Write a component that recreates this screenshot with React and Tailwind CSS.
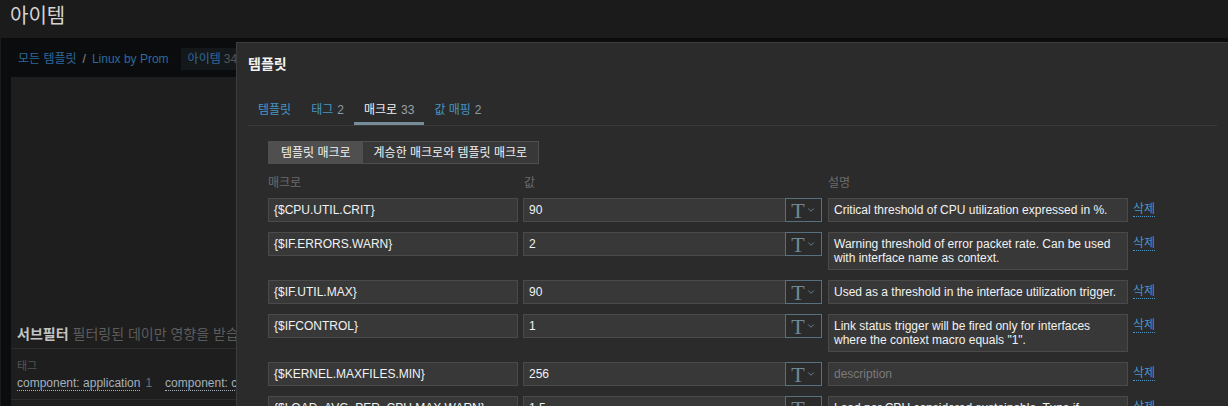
import { ChevronDown } from 'lucide-react';

const rows = [
  { macro: '{$CPU.UTIL.CRIT}', value: '90', desc: 'Critical threshold of CPU utilization expressed in %.' },
  { macro: '{$IF.ERRORS.WARN}', value: '2', desc: 'Warning threshold of error packet rate. Can be used with interface name as context.' },
  { macro: '{$IF.UTIL.MAX}', value: '90', desc: 'Used as a threshold in the interface utilization trigger.' },
  { macro: '{$IFCONTROL}', value: '1', desc: 'Link status trigger will be fired only for interfaces where the context macro equals "1".' },
  { macro: '{$KERNEL.MAXFILES.MIN}', value: '256', desc: '' },
  { macro: '{$LOAD_AVG_PER_CPU.MAX.WARN}', value: '1.5', desc: 'Load per CPU considered sustainable. Tune if needed.' },
];

function MacroRow({ macro, value, desc }) {
  return (
    <div className="flex items-start">
      <div className="w-[250px] h-[24px] flex items-center px-[5px] bg-[#383838] border border-[#4a4a4a] text-[12px] text-[#f2f2f2] whitespace-nowrap overflow-hidden">
        {macro}
      </div>
      <div className="ml-[5px] w-[299px] h-[24px] flex">
        <div className="flex-1 flex items-center px-[5px] bg-[#383838] border border-[#4a4a4a] text-[12px] text-[#f2f2f2]">
          {value}
        </div>
        <div className="w-[37px] -ml-px flex items-center justify-center gap-[1px] bg-[#2b2b2b] border border-[#56707d] text-[#6d8999]">
          <span className="font-['Liberation_Serif',serif] text-[22px] leading-none mt-[1px]">T</span>
          <ChevronDown size={10} strokeWidth={2.2} />
        </div>
      </div>
      <div className="ml-[6px] w-[300px] min-h-[24px] px-[5px] py-[4px] bg-[#383838] border border-[#4a4a4a] text-[12px] leading-[14px] text-[#f2f2f2]">
        {desc ? desc : <span className="text-[#7a7a7a]">description</span>}
      </div>
      <div className="ml-[5px] h-[24px] flex items-center">
        <span className="text-[12px] text-[#4796c4] border-b border-dotted border-[#4796c4] leading-[13px]">삭제</span>
      </div>
    </div>
  );
}

export default function App() {
  return (
    <div className="w-[1228px] h-[406px] overflow-hidden relative bg-[#0b0c0e] font-['Liberation_Sans','Noto_Sans_CJK_KR',sans-serif]">
      {/* page header */}
      <div className="h-[38px] bg-[#1b1b1b] px-[10px] pt-[3px]">
        <h1 className="text-[20px] leading-[26px] text-[#d4d4d4]">아이템</h1>
      </div>

      {/* page body behind the modal */}
      <div className="border-l border-[#1c1c1c]">
        <div className="h-[39px] pl-[17px] pt-[10px] flex items-start">
          <div className="h-[22px] flex items-center text-[12px] text-[#2e6a9a]">
            <span>모든 템플릿</span>
            <span className="mx-[6px] text-[#8c8c8c]">/</span>
            <span>Linux by Prom</span>
          </div>
          <div className="ml-[12px] h-[22px] px-[7px] flex items-center bg-[#15181b] text-[12px] text-[#2e6a9a]">
            아이템 <span className="ml-[3px] text-[#555]">34</span>
          </div>
        </div>
        <div className="ml-[10px] h-[330px] bg-[#1e1e1e] pt-[244px]">
          <div className="h-[28px] pl-[6px] flex items-center border-b border-[#2c2c2c] text-[14px] whitespace-nowrap">
            <span className="font-bold text-[#c4c4c4]">서브필터</span>
            <span className="ml-[4px] text-[#5c5c5c]">필터링된 데이만 영향을 받습니다</span>
          </div>
          <div className="pl-[6px] pt-[10px] h-[51px] border-b border-[#2c2c2c]">
            <div className="text-[11px] leading-[14px] text-[#555]">태그</div>
            <div className="mt-[1px] flex items-center text-[12px] whitespace-nowrap">
              <span className="text-[#a4b0bb] border-b border-dotted border-[#a4b0bb] leading-[14px]">component: application</span>
              <span className="ml-[5px] text-[#6e6e6e]">1</span>
              <span className="ml-[13px] text-[#a4b0bb] border-b border-dotted border-[#a4b0bb] leading-[14px]">component: cpu</span>
            </div>
          </div>
        </div>
      </div>

      {/* modal */}
      <div className="absolute left-[236px] top-[42px] right-0 bottom-0 bg-[#2b2b2b] border-t border-l border-[#3d3d3d] text-[#f2f2f2]">
        <div className="h-[42px] px-[11px] flex items-center">
          <span className="text-[14px] font-bold text-[#f2f2f2]">템플릿</span>
        </div>
        <div className="mt-[6px] mx-[11px] flex border-b border-[#3a3a3a] text-[12px]">
          <div className="h-[34px] px-[10px] pt-[4px] flex items-center text-[#4796c4]">템플릿</div>
          <div className="h-[34px] px-[10px] pt-[4px] flex items-center text-[#4796c4]">
            태그 <span className="ml-[4px] text-[#8a9aa6]">2</span>
          </div>
          <div className="h-[34px] px-[10px] pt-[7px] flex items-center text-[#f2f2f2] border-b-[3px] border-[#768c99]">
            매크로 <span className="ml-[4px] text-[#9aa3a9]">33</span>
          </div>
          <div className="h-[34px] px-[10px] pt-[4px] flex items-center text-[#4796c4]">
            값 매핑 <span className="ml-[4px] text-[#8a9aa6]">2</span>
          </div>
        </div>

        <div className="pl-[31px] pt-[15px]">
          <div className="inline-flex h-[23px] border border-[#4f4f4f] text-[12px] align-top">
            <div className="px-[12px] flex items-center bg-[#4f4f4f] text-[#f2f2f2]">템플릿 매크로</div>
            <div className="px-[11px] flex items-center bg-[#383838] text-[#f2f2f2]">계승한 매크로와 템플릿 매크로</div>
          </div>

          <div className="mt-[9px] mb-[6px] h-[18px] flex items-center text-[12px] text-[#6b6b6b]">
            <div className="w-[255px]">매크로</div>
            <div className="w-[305px] pl-[1px]">값</div>
            <div>설명</div>
          </div>

          <div className="flex flex-col gap-[10px]">
            {rows.map((r) => (
              <MacroRow key={r.macro} {...r} />
            ))}
          </div>
        </div>
      </div>
    </div>
  );
}
